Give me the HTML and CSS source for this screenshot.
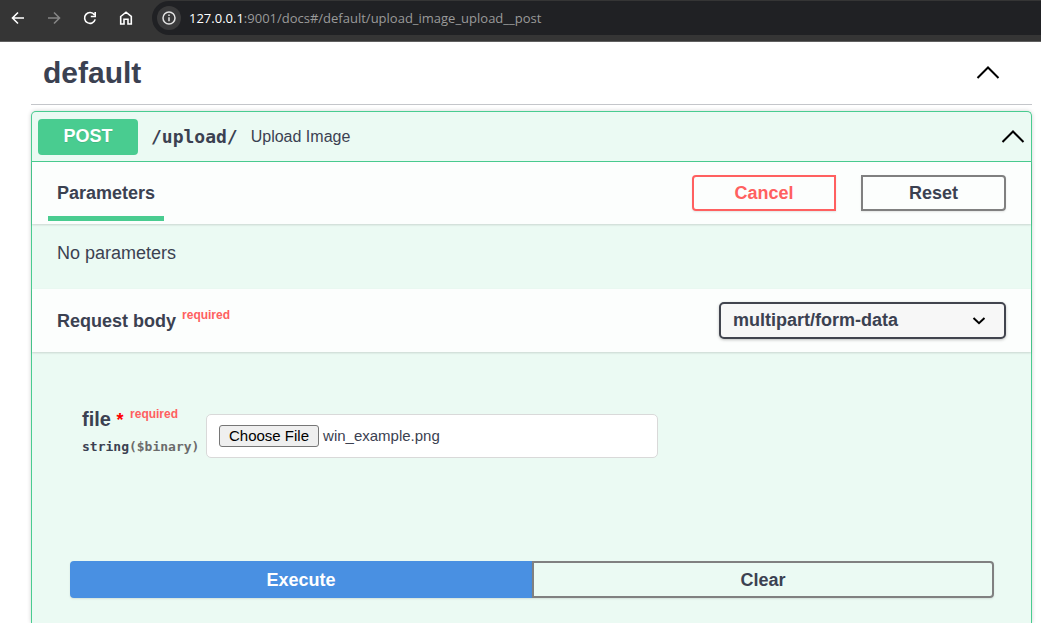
FILE: index.html
```html
<!DOCTYPE html>
<html lang="en">
<head>
<meta charset="utf-8">
<meta name="viewport" content="width=device-width, initial-scale=1">
<title>Upload Image</title>
<link rel="stylesheet" href="styles.css">
</head>
<body>
<header class="toolbar">
  <nav class="toolbar-nav" aria-label="Browser">
    <button class="nav-button" type="button" aria-label="Back">
      <svg class="nav-icon" viewBox="0 0 16 16"><path d="M14 8H3M8 2.5 2.5 8 8 13.5"/></svg>
    </button>
    <button class="nav-button nav-button-off" type="button" aria-label="Forward">
      <svg class="nav-icon" viewBox="0 0 16 16"><path d="M2 8h11M8 2.5 13.5 8 8 13.5"/></svg>
    </button>
    <button class="nav-button" type="button" aria-label="Reload">
      <svg class="nav-icon" viewBox="0 0 16 16"><path d="M12.4 4.8A5.4 5.4 0 1 0 13.2 9.4M13.2 2v4.5H8.8"/></svg>
    </button>
    <button class="nav-button" type="button" aria-label="Home">
      <svg class="nav-icon" viewBox="0 0 16 16"><path d="M2.7 6.5 8 2.2l5.300 4.300v7.500H10V9.300H6V14H2.700Z"/></svg>
    </button>
  </nav>
  <div class="address">
    <button class="site-info" type="button" aria-label="Site information">
      <svg class="info-icon" viewBox="0 0 16 16"><circle cx="8" cy="8" r="6"/><path d="M8 7.200v4M8 4.400V6"/></svg>
    </button>
    <span class="url"><span class="url-host">127.0.0.1</span>:9001/docs#/default/upload_image_upload__post</span>
  </div>
</header>

<main class="page">
  <div class="tag">
    <h1 class="tag-title">default</h1>
    <button class="toggle" type="button" aria-label="Collapse default">
      <svg class="chevron" viewBox="0 0 24 14"><path d="M1.5 12 12 1.5 22.500 12"/></svg>
    </button>
  </div>

  <section class="operation">
    <div class="summary">
      <button class="method" type="button">POST</button>
      <span class="path">/upload/</span>
      <span class="description">Upload Image</span>
      <button class="toggle" type="button" aria-label="Collapse operation">
        <svg class="chevron" viewBox="0 0 24 14"><path d="M1.5 12 12 1.5 22.500 12"/></svg>
      </button>
    </div>

    <div class="section-head">
      <h2 class="tab">Parameters</h2>
      <div class="try-out">
        <button class="button button-cancel" type="button">Cancel</button>
        <button class="button button-reset" type="button">Reset</button>
      </div>
    </div>
    <p class="empty">No parameters</p>

    <div class="section-head">
      <h2 class="body-title"><label for="content-type">Request body</label> <span class="required">required</span></h2>
      <select class="content-type" id="content-type">
        <option>multipart/form-data</option>
      </select>
    </div>

    <form class="body-form">
      <div class="field">
        <div class="field-name">
          <label class="field-label" for="file">file <span class="star">*</span> <span class="required">required</span></label>
          <div class="field-type">string<span class="field-format">($binary)</span></div>
        </div>
        <input class="file-input" id="file" type="file">
      </div>
      <div class="actions">
        <button class="button button-execute" type="button">Execute</button>
        <button class="button button-clear" type="reset">Clear</button>
      </div>
    </form>
  </section>
</main>
<script src="script.js"></script>
</body>
</html>
```

FILE: styles.css
```css
* { box-sizing: border-box; }

body {
  margin: 0;
  min-height: 100vh;
  display: flex;
  flex-direction: column;
  background: #fff;
  color: #3b4151;
  font-family: "Liberation Sans", Arial, sans-serif;
  font-size: 18px;
  line-height: 20px;
}

h1, h2, p { margin: 0; }

button, select, input { font: inherit; color: inherit; }

button {
  padding: 0;
  border: 0;
  background: none;
  cursor: pointer;
}

svg {
  display: block;
  fill: none;
  stroke: currentColor;
}

/* Browser toolbar */
.toolbar {
  display: flex;
  align-items: center;
  height: 42px;
  padding-bottom: 5px;
  background: #353535;
  border-bottom: 1px solid #606060;
}

.toolbar-nav { display: flex; }

.nav-button {
  display: grid;
  place-items: center;
  width: 36px;
  height: 34px;
  color: #fff;
}

.nav-button-off { color: #858585; }

.nav-icon {
  width: 16px;
  height: 16px;
  stroke-width: 1.6;
}

.address {
  flex: 1;
  display: flex;
  align-items: center;
  gap: 8px;
  height: 34px;
  margin-left: 8px;
  padding-left: 5px;
  background: #202124;
  border-radius: 17px 0 0 17px;
}

.site-info {
  display: grid;
  place-items: center;
  width: 24px;
  height: 24px;
  border-radius: 50%;
  background: #3a3a3b;
  color: #e3e3e3;
}

.info-icon {
  width: 16px;
  height: 16px;
  stroke-width: 1.5;
}

.url {
  color: #9a9a9a;
  font-family: "Open Sans", "Noto Sans", sans-serif;
  font-size: 13px;
  white-space: nowrap;
}

.url-host { color: #fff; }

/* Documentation page */
.page {
  flex: 1;
  display: flex;
  flex-direction: column;
  padding: 0 9px 0 31px;
}

.tag {
  display: flex;
  align-items: center;
  justify-content: space-between;
  height: 63px;
  margin-bottom: 6px;
  padding: 0 32px 0 12px;
  border-bottom: 1px solid #c4c6ca;
}

.tag-title {
  font-size: 30px;
  line-height: 36px;
}

.toggle { color: #000; }

.chevron {
  width: 24px;
  height: 14px;
  stroke-width: 2;
}

.operation {
  flex: 1;
  border: 1px solid #49cc90;
  border-bottom: 0;
  border-radius: 5px 5px 0 0;
  background: #ebfaf3;
  box-shadow: 0 0 4px rgba(0, 0, 0, .19);
}

.summary {
  display: flex;
  align-items: center;
  height: 50px;
  padding: 0 6px;
  border-bottom: 1px solid #49cc90;
}

.method {
  width: 100px;
  height: 36px;
  padding-bottom: 2px;
  border-radius: 4px;
  background: #49cc90;
  color: #fff;
  font-weight: 700;
  text-shadow: 0 1px 0 rgba(0, 0, 0, .1);
}

.path {
  margin: 0 13px;
  font-family: "DejaVu Sans Mono", monospace;
  font-weight: 700;
}

.description {
  flex: 1;
  font-size: 16px;
}

.section-head {
  display: flex;
  align-items: center;
  justify-content: space-between;
  min-height: 62px;
  padding: 0 25px 0 16px;
  background: #fcfefd;
  box-shadow: 0 1px 2px rgba(0, 0, 0, .15);
}

.tab, .body-title {
  font-size: 18px;
  line-height: 20px;
}

.tab {
  align-self: flex-end;
  margin-bottom: 3px;
  padding: 0 9px 13px;
  border-bottom: 5px solid #49cc90;
}

.body-title { padding-left: 9px; }

.required {
  padding-left: 1px;
  color: #ff6060;
  font-size: 12px;
  font-weight: 700;
  line-height: 0;
  vertical-align: 8px;
}

.try-out {
  display: flex;
  gap: 25px;
}

.button {
  height: 36px;
  border: 2px solid #808080;
  font-weight: 700;
  box-shadow: 0 1px 2px rgba(0, 0, 0, .1);
}

.button-cancel {
  width: 144px;
  border-color: #ff6060;
  border-radius: 4px 0 0 4px;
  color: #ff6060;
}

.button-reset {
  width: 145px;
  border-radius: 0 4px 4px 0;
}

.empty {
  padding: 19px 25px 26px;
}

.content-type {
  appearance: none;
  width: 287px;
  height: 37px;
  margin: 13px 0;
  padding: 0 50px 2px 12px;
  border: 2px solid #41444e;
  border-radius: 5px;
  background: #f7f7f7 url("data:image/svg+xml,%3Csvg xmlns='http://www.w3.org/2000/svg' viewBox='0 0 14 8'%3E%3Cpath d='M1.5 1 7 6.2 12.5 1' fill='none' stroke='%23000' stroke-width='2'/%3E%3C/svg%3E") right 18px center / 14px 8px no-repeat;
  box-shadow: 0 1px 3px rgba(0, 0, 0, .25);
  font-weight: 700;
}

.body-form { padding: 57px 37px 25px 38px; }

.field {
  display: flex;
  align-items: flex-start;
  padding-left: 12px;
}

.field-name { width: 124px; }

.field-label {
  display: block;
  font-size: 20px;
  font-weight: 700;
  line-height: 20px;
}

.star { color: #f00; font-size: 18px; }

.field-type {
  margin-top: 7px;
  font-family: "DejaVu Sans Mono", monospace;
  font-size: 13px;
  font-weight: 700;
}

.field-format { color: #6b6b6b; }

.file-input {
  width: 452px;
  max-width: 100%;
  height: 44px;
  margin-top: 5px;
  padding: 10px 12px;
  border: 1px solid #d9d9d9;
  border-radius: 5px;
  background: #fff;
  font-size: 15px;
}

.file-input::file-selector-button {
  height: 22px;
  margin-right: 4px;
  padding: 0 9px;
  border: 1px solid #767676;
  border-radius: 3px;
  background: #efefef;
  color: #000;
  font: inherit;
}

.actions {
  display: flex;
  margin-top: 103px;
}

.actions .button {
  flex: 1;
  height: 37px;
}

.button-execute {
  border-color: #4990e2;
  border-radius: 4px 0 0 4px;
  background: #4990e2;
  color: #fff;
}

.button-clear { border-radius: 0 4px 4px 0; }
```

FILE: script.js
```js
// Preselect the example image in the upload field.
const selection = new DataTransfer();
selection.items.add(new File([""], "win_example.png", { type: "image/png" }));
document.getElementById("file").files = selection.files;
```
